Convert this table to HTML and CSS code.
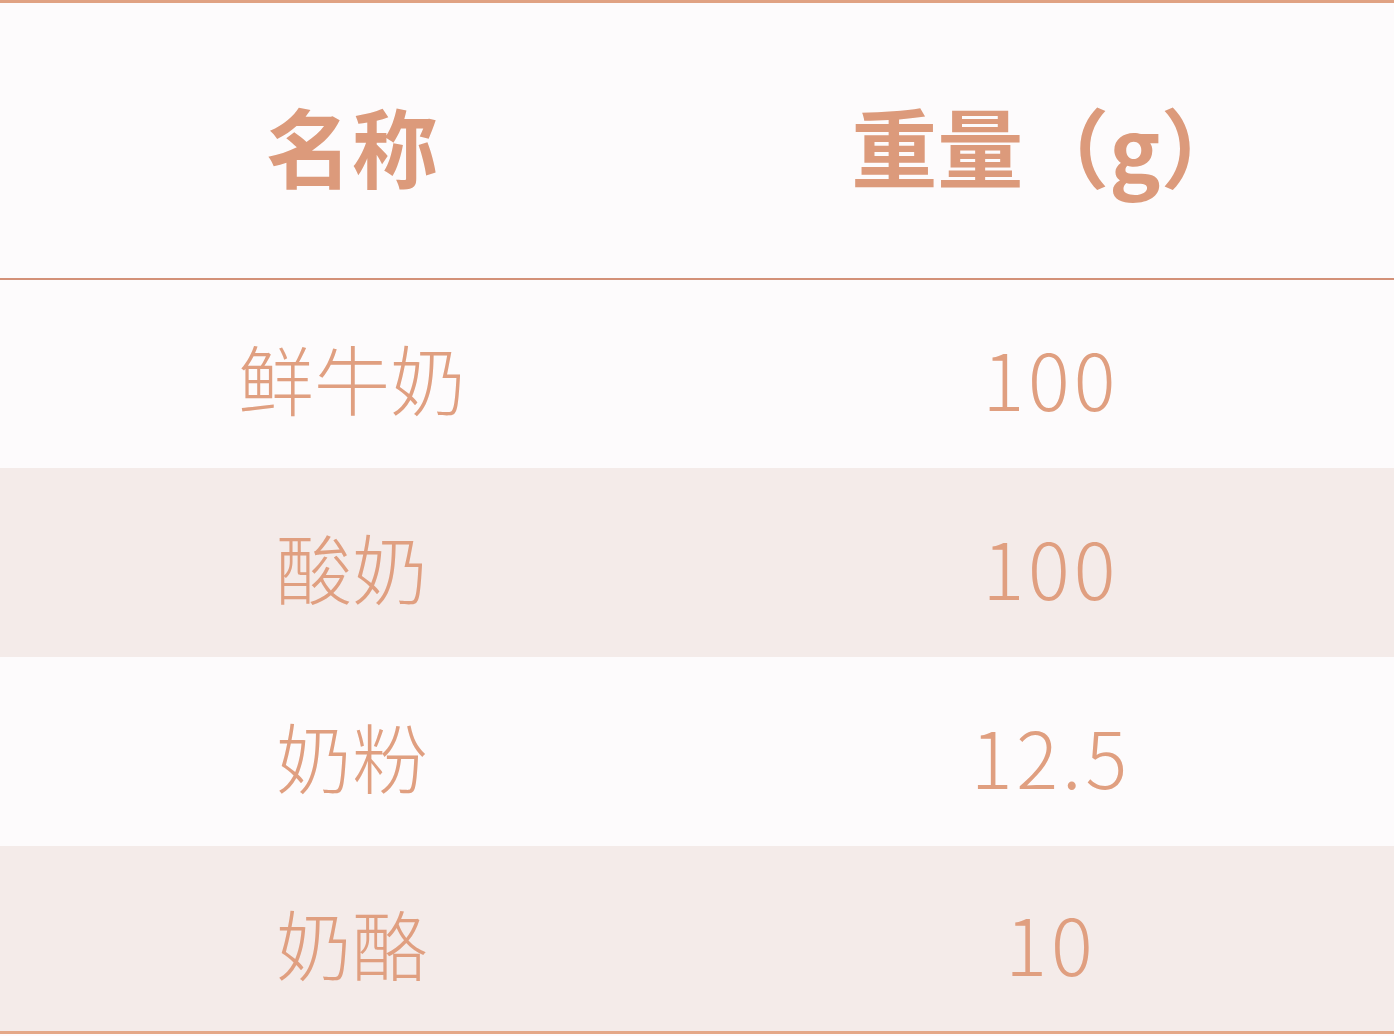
FILE: index.html
```html
<!DOCTYPE html>
<html lang="zh">
<head>
<meta charset="utf-8">
<title>奶制品重量</title>
<link rel="stylesheet" href="styles.css">
</head>
<body>
<div class="table">
  <div class="row head">
    <div class="cell">名称</div>
    <div class="cell">重量（g）</div>
  </div>
  <div class="row r1">
    <div class="cell">鲜牛奶</div>
    <div class="cell num">100</div>
  </div>
  <div class="row r2 alt">
    <div class="cell">酸奶</div>
    <div class="cell num">100</div>
  </div>
  <div class="row r3">
    <div class="cell">奶粉</div>
    <div class="cell num">12.5</div>
  </div>
  <div class="row r4 alt last">
    <div class="cell">奶酪</div>
    <div class="cell num">10</div>
  </div>
</div>
</body>
</html>
```

FILE: styles.css
```css
html, body {
  margin: 0;
  padding: 0;
  background: #fdfbfc;
}

.table {
  width: 1394px;
  border-top: 3px solid #e0a283;
  font-family: "Noto Sans CJK SC", "Noto Sans", sans-serif;
  color: #e09f80;
}

.row {
  display: grid;
  grid-template-columns: 704px 690px;
  align-items: center;
  box-sizing: border-box;
}

.cell {
  text-align: center;
}

.head {
  height: 277px;
  border-bottom: 2px solid #d39178;
  font-size: 86px;
  font-weight: 700;
  color: #dc9a7b;
  padding-top: 8px;
}

.r1, .r2, .r3, .r4 {
  font-size: 76px;
  font-weight: 300;
  padding-top: 6px;
}

.r1 { height: 188px; }
.r2 { height: 189px; }
.r3 { height: 189px; }
.r4 { height: 188px; }

.alt {
  background: #f4ebe9;
}

.num {
  font-size: 78px;
  letter-spacing: 4px;
  padding-left: 4px;
}

.last {
  border-bottom: 3px solid #e4a888;
}
```
